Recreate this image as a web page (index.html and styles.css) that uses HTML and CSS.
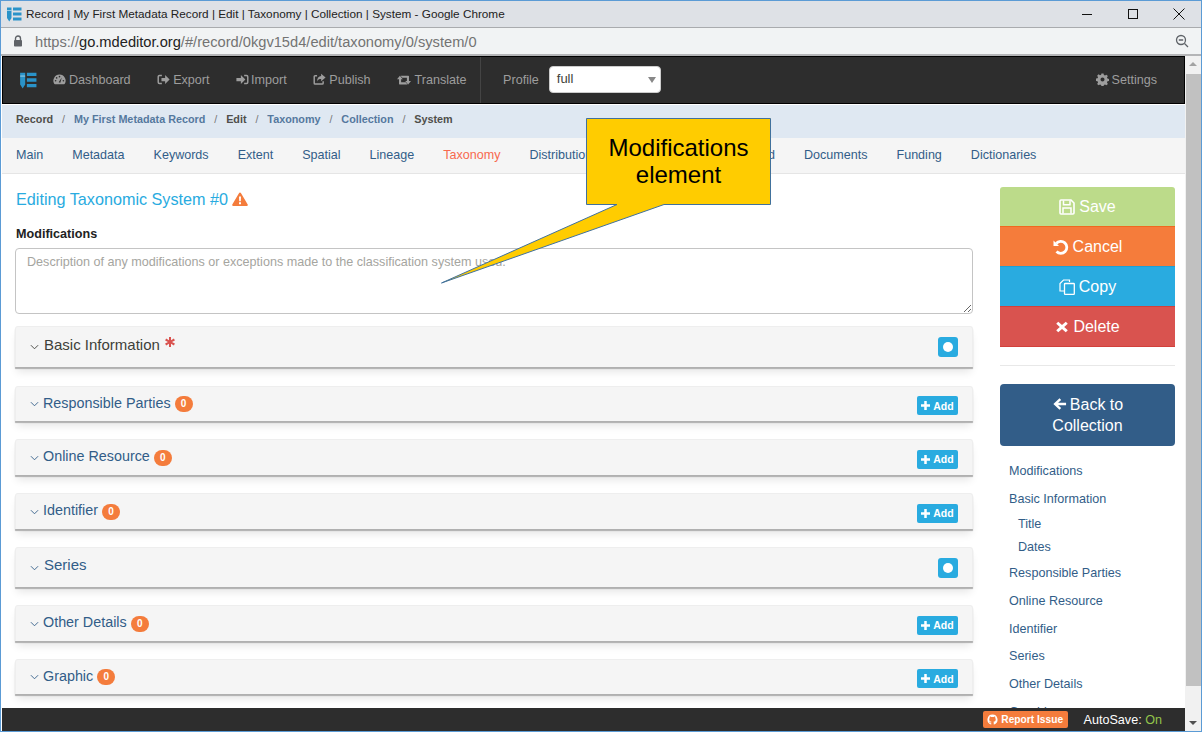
FILE: index.html
```html
<!DOCTYPE html>
<html lang="en">
<head>
<meta charset="utf-8">
<title>Record | My First Metadata Record | Edit | Taxonomy | Collection | System</title>
<link rel="stylesheet" href="styles.css">
</head>
<body>
<div class="window">
  <header class="titlebar">
    <svg class="logo-sm" viewBox="0 0 16 16"><use href="#logo"/></svg>
    <span class="title-text">Record | My First Metadata Record | Edit | Taxonomy | Collection | System - Google Chrome</span>
    <div class="win-controls">
      <svg viewBox="0 0 12 12"><path d="M1 6.500h10" stroke="#111" stroke-width="1"/></svg>
      <svg viewBox="0 0 12 12"><rect x="1.500" y="1.500" width="9" height="9" fill="none" stroke="#111"/></svg>
      <svg viewBox="0 0 12 12"><path d="M.5.500l11 11M11.500.500l-11 11" stroke="#111" fill="none"/></svg>
    </div>
  </header>
  <div class="addressbar">
    <svg class="lock" viewBox="0 0 10 12"><path d="M2.500 5V3.500a2.500 2.500 0 0 1 5 0V5" fill="none" stroke="#5f6368" stroke-width="1.400"/><rect x="1" y="5" width="8" height="6.500" rx=".8" fill="#5f6368"/></svg>
    <span class="url"><span class="url-dim">https://</span><span class="url-host">go.mdeditor.org</span><span class="url-dim">/#/record/0kgv15d4/edit/taxonomy/0/system/0</span></span>
    <svg class="zoom-out" viewBox="0 0 14 14"><circle cx="6" cy="6" r="4.500" fill="none" stroke="#5f6368" stroke-width="1.300"/><path d="M3.800 6h4.400M9.500 9.500l3.500 3.500" stroke="#5f6368" stroke-width="1.300"/></svg>
  </div>
  <div class="viewport">
    <div class="app">
      <div class="app-clip">
        <nav class="navbar">
          <svg class="logo" viewBox="0 0 16 16"><use href="#logo"/></svg>
          <a class="nav-link"><svg class="ic" viewBox="0 0 16 16"><use href="#i-dash"/></svg>Dashboard</a>
          <a class="nav-link"><svg class="ic" viewBox="0 0 16 16"><use href="#i-export"/></svg>Export</a>
          <a class="nav-link"><svg class="ic ic-tight" viewBox="0 0 16 16"><use href="#i-import"/></svg>Import</a>
          <a class="nav-link"><svg class="ic" viewBox="0 0 16 16"><use href="#i-publish"/></svg>Publish</a>
          <a class="nav-link"><svg class="ic ic-wide" viewBox="0 0 16 16"><use href="#i-retweet"/></svg>Translate</a>
          <div class="nav-profile">
            <span class="nav-label">Profile</span>
            <div class="select"><span>full</span><i class="select-caret"></i></div>
          </div>
          <a class="nav-link nav-settings"><svg class="ic ic-gear" viewBox="0 0 16 16"><use href="#i-gear"/></svg>Settings</a>
        </nav>
        <ol class="breadcrumb">
          <li>Record</li><li class="sep">/</li>
          <li class="crumb-link">My First Metadata Record</li><li class="sep">/</li>
          <li>Edit</li><li class="sep">/</li>
          <li class="crumb-link">Taxonomy</li><li class="sep">/</li>
          <li class="crumb-link">Collection</li><li class="sep">/</li>
          <li>System</li>
        </ol>
        <ul class="tabs">
          <li>Main</li><li>Metadata</li><li>Keywords</li><li>Extent</li><li>Spatial</li><li>Lineage</li>
          <li class="tab-active">Taxonomy</li><li>Distribution</li><li>Constraints</li><li>Associated</li><li>Documents</li><li>Funding</li><li>Dictionaries</li>
        </ul>
        <div class="page">
          <main class="main">
            <h3 class="heading">Editing Taxonomic System #0 <svg class="warn" viewBox="0 0 16 14"><path d="M8 .5a1 1 0 0 1 .9.5l6.800 11.500a1 1 0 0 1-.9 1.500H1.200a1 1 0 0 1-.9-1.500L7.100 1A1 1 0 0 1 8 .5z" fill="#f47c3c"/><path d="M7 4.500h2l-.2 4.800H7.200zM7 10.300h2v2H7z" fill="#fff"/></svg></h3>
            <label class="field-label">Modifications</label>
            <textarea class="textarea" placeholder="Description of any modifications or exceptions made to the classification system used."></textarea>

            <section class="panel panel-tall">
              <svg class="chev" viewBox="0 0 10 6"><path d="M1 1l4 4 4-4" fill="none" stroke="#3e3f3a" stroke-width="1"/></svg>
              <span class="panel-title panel-title-dark">Basic Information</span>
              <svg class="req" viewBox="0 0 10 10"><path d="M4 0h2v3.300l2.900-1.700 1 1.800L7 5l2.900 1.600-1 1.800L6 6.700V10H4V6.700L1.100 8.400l-1-1.800L3 5 .1 3.400l1-1.800L4 3.300z" fill="#d9534f"/></svg>
              <span class="btn-dot"><i></i></span>
            </section>
            <section class="panel">
              <svg class="chev" viewBox="0 0 10 6"><path d="M1 1l4 4 4-4" fill="none" stroke="#325d88" stroke-width="1"/></svg>
              <span class="panel-title">Responsible Parties</span><span class="badge">0</span>
              <span class="btn-add"><svg viewBox="0 0 10 10"><path d="M3.600 0h2.800v3.600H10v2.800H6.400V10H3.600V6.400H0V3.600h3.600z" fill="#fff"/></svg>Add</span>
            </section>
            <section class="panel">
              <svg class="chev" viewBox="0 0 10 6"><path d="M1 1l4 4 4-4" fill="none" stroke="#325d88" stroke-width="1"/></svg>
              <span class="panel-title">Online Resource</span><span class="badge">0</span>
              <span class="btn-add"><svg viewBox="0 0 10 10"><path d="M3.600 0h2.800v3.600H10v2.800H6.400V10H3.600V6.400H0V3.600h3.600z" fill="#fff"/></svg>Add</span>
            </section>
            <section class="panel">
              <svg class="chev" viewBox="0 0 10 6"><path d="M1 1l4 4 4-4" fill="none" stroke="#325d88" stroke-width="1"/></svg>
              <span class="panel-title">Identifier</span><span class="badge">0</span>
              <span class="btn-add"><svg viewBox="0 0 10 10"><path d="M3.600 0h2.800v3.600H10v2.800H6.400V10H3.600V6.400H0V3.600h3.600z" fill="#fff"/></svg>Add</span>
            </section>
            <section class="panel panel-series">
              <svg class="chev" viewBox="0 0 10 6"><path d="M1 1l4 4 4-4" fill="none" stroke="#325d88" stroke-width="1"/></svg>
              <span class="panel-title panel-title-big">Series</span>
              <span class="btn-dot"><i></i></span>
            </section>
            <section class="panel">
              <svg class="chev" viewBox="0 0 10 6"><path d="M1 1l4 4 4-4" fill="none" stroke="#325d88" stroke-width="1"/></svg>
              <span class="panel-title">Other Details</span><span class="badge">0</span>
              <span class="btn-add"><svg viewBox="0 0 10 10"><path d="M3.600 0h2.800v3.600H10v2.800H6.400V10H3.600V6.400H0V3.600h3.600z" fill="#fff"/></svg>Add</span>
            </section>
            <section class="panel">
              <svg class="chev" viewBox="0 0 10 6"><path d="M1 1l4 4 4-4" fill="none" stroke="#325d88" stroke-width="1"/></svg>
              <span class="panel-title">Graphic</span><span class="badge">0</span>
              <span class="btn-add"><svg viewBox="0 0 10 10"><path d="M3.600 0h2.800v3.600H10v2.800H6.400V10H3.600V6.400H0V3.600h3.600z" fill="#fff"/></svg>Add</span>
            </section>
          </main>
          <aside class="side">
            <div class="actions">
              <button class="act act-save"><svg viewBox="0 0 16 16"><use href="#i-save"/></svg>Save</button>
              <button class="act act-cancel"><svg viewBox="0 0 16 16"><use href="#i-undo"/></svg>Cancel</button>
              <button class="act act-copy"><svg viewBox="0 0 16 16"><use href="#i-copy"/></svg>Copy</button>
              <button class="act act-delete"><svg class="icon-x" viewBox="0 0 16 16"><path d="M3.700 2l4.300 3.800L12.300 2 14.600 4.400 10.500 8l4.100 3.600-2.300 2.400L8 10.200 3.700 14 1.400 11.600 5.500 8 1.400 4.400z" fill="#fff"/></svg>Delete</button>
            </div>
            <hr class="rule">
            <button class="back"><svg viewBox="0 0 16 16"><path d="M8 1.500l1.900 1.900L6.400 6.500h9.100v3H6.400l3.500 3.100L8 14.500 1 8z" fill="#fff"/></svg>Back to Collection</button>
            <ul class="toc">
              <li>Modifications</li>
              <li>Basic Information</li>
              <li class="toc-sub">Title</li>
              <li class="toc-sub toc-sub2">Dates</li>
              <li class="toc-after">Responsible Parties</li>
              <li>Online Resource</li>
              <li>Identifier</li>
              <li>Series</li>
              <li>Other Details</li>
              <li>Graphic</li>
            </ul>
          </aside>
        </div>
      </div>
      <footer class="footer">
        <span class="report"><svg viewBox="0 0 16 16"><path d="M8 .8a7.400 7.400 0 0 0-2.300 14.400c.4.100.5-.2.500-.4v-1.300c-2.100.4-2.500-1-2.500-1-.3-.9-.8-1.100-.8-1.100-.7-.5 0-.5 0-.5.700.100 1.100.8 1.100.8.700 1.100 1.700.8 2.100.6.100-.5.300-.8.500-1-1.600-.2-3.400-.8-3.400-3.600 0-.8.300-1.500.8-2-.1-.2-.3-.9.100-2 0 0 .6-.2 2 .8a7 7 0 0 1 3.700 0c1.400-1 2-.8 2-.8.400 1.100.2 1.800.1 2 .5.500.8 1.200.8 2 0 2.800-1.700 3.400-3.400 3.600.3.200.5.700.5 1.400v2.100c0 .2.100.5.500.4A7.400 7.400 0 0 0 8 .8z" fill="#fff"/></svg>Report Issue</span>
        <span class="autosave">AutoSave: <b>On</b></span>
      </footer>
    </div>
    <div class="scrollbar">
      <i class="arrow-up"></i>
      <div class="thumb"></div>
      <i class="arrow-down"></i>
    </div>
    <div class="callout">
      <svg class="callout-shape" viewBox="0 0 186 168"><path d="M.5.500H184.500V86.500H78L-144.500 165 31 86.500H.5z" fill="#ffcc00" stroke="#41719c" stroke-width="1"/></svg>
      <span class="callout-text">Modifications<br>element</span>
    </div>
  </div>
</div>
<svg class="sprite" aria-hidden="true">
  <symbol id="logo" viewBox="0 0 16 16"><path d="M1 1.500h4.500v10.500L3.250 15.500 1 12zM7 1.500h8.500v3H7zM7 6.500h8.500v3H7zM7 11.500h8.500v3H7z" fill="#2a93c9"/><path d="M1 4.500h4.500" stroke="#fff" stroke-width=".5"/></symbol>
  <symbol id="i-dash" viewBox="0 0 16 16"><path d="M8 2a7.500 7.500 0 0 0-6.500 11.300c.2.300.5.500.9.500h11.200c.4 0 .7-.2.900-.5A7.500 7.500 0 0 0 8 2z" fill="#9d9d9d"/><circle cx="8" cy="4.500" r="1" fill="#2d2d2d"/><circle cx="4.500" cy="6" r="1" fill="#2d2d2d"/><circle cx="3.200" cy="9.500" r="1" fill="#2d2d2d"/><circle cx="12.800" cy="9.500" r="1" fill="#2d2d2d"/><path d="M7 11.500L10.800 5.500 9 12z" fill="#2d2d2d"/></symbol>
  <symbol id="i-export" viewBox="0 0 16 16"><path d="M6 3H3a1.500 1.500 0 0 0-1.500 1.500v7A1.500 1.500 0 0 0 3 13h3" fill="none" stroke="#9d9d9d" stroke-width="1.800"/><path d="M5.500 6H10V2.500L15.500 8 10 13.500V10H5.500z" fill="#9d9d9d"/></symbol>
  <symbol id="i-import" viewBox="0 0 16 16"><path d="M10 3h3a1.500 1.500 0 0 1 1.500 1.500v7A1.500 1.500 0 0 1 13 13h-3" fill="none" stroke="#9d9d9d" stroke-width="1.800"/><path d="M.5 6H6V2.500L11.500 8 6 13.500V10H.5z" fill="#9d9d9d"/></symbol>
  <symbol id="i-publish" viewBox="0 0 16 16"><path d="M12.500 10v2.500a1 1 0 0 1-1 1h-9a1 1 0 0 1-1-1v-8a1 1 0 0 1 1-1H5" fill="none" stroke="#9d9d9d" stroke-width="1.800"/><path d="M10 1l5.500 4.500L10 10V7.500c-2.500 0-4 .5-5 3 0-4 2-6.500 5-6.700z" fill="#9d9d9d"/></symbol>
  <symbol id="i-retweet" viewBox="0 0 16 16"><path d="M3.300 3L6.600 7H4.700v3.500H10l2 2.500H3a.7.7 0 0 1-.7-.7V7H0z" fill="#9d9d9d"/><path d="M12.700 13L9.400 9h1.900V5.500H6L4 3h9a.7.7 0 0 1 .7.7V9H16z" fill="#9d9d9d"/></symbol>
  <symbol id="i-gear" viewBox="0 0 16 16"><path fill-rule="evenodd" d="M6.700 1h2.600l.4 2 1.400.6 1.700-1.100 1.800 1.800-1.100 1.700.6 1.400 2 .4v2.600l-2 .4-.6 1.400 1.100 1.700-1.800 1.800-1.700-1.100-1.400.6-.4 2H6.700l-.4-2-1.400-.6-1.700 1.100-1.800-1.800 1.100-1.700-.6-1.400-2-.4V7.400l2-.4.600-1.400L1.400 3.900l1.800-1.800 1.700 1.100 1.400-.6zM8 6a2.500 2.500 0 1 0 0 5 2.500 2.500 0 0 0 0-5z" fill="#9d9d9d" transform="translate(0 -.5)"/></symbol>
  <symbol id="i-save" viewBox="0 0 16 16"><path d="M2 1h10l3 3v10a1 1 0 0 1-1 1H2a1 1 0 0 1-1-1V2a1 1 0 0 1 1-1z" fill="none" stroke="#fff" stroke-width="1.600"/><path d="M4.500 1.500v4.300h6.500V1.500M4 14.500V9h8v5.500" fill="none" stroke="#fff" stroke-width="1.500"/></symbol>
  <symbol id="i-undo" viewBox="0 0 16 16"><path d="M.5 1.500l5.500 5.500H.5z" fill="#fff"/><path d="M3.200 4.500A6 6 0 1 1 3.500 12.500" fill="none" stroke="#fff" stroke-width="2.800"/></symbol>
  <symbol id="i-copy" viewBox="0 0 16 16"><path d="M10.500 3V1H4.500L1 4.500V12h4" fill="none" stroke="#fff" stroke-width="1.200"/><rect x="5.500" y="4.500" width="9.800" height="10.800" rx=".6" fill="none" stroke="#fff" stroke-width="1.300"/></symbol>
</svg>
</body>
</html>
```
FILE: styles.css
```css
* { box-sizing: border-box; }
html, body { margin: 0; padding: 0; height: 100%; overflow: hidden; background: #fff; }
body { font-family: "Liberation Sans", Arial, sans-serif; color: #3e3f3a; }
ul, ol { list-style: none; margin: 0; padding: 0; }
.sprite { display: none; }

.window { display: flex; flex-direction: column; height: 732px; width: 1202px; border: 1px solid #5b9bd5; }

.titlebar { display: flex; align-items: center; height: 27px; background: #dee1e6; border-bottom: 1px solid #a9abae; padding-left: 5px; flex: none; }
.logo-sm { width: 16px; height: 16px; margin-right: 4px; }
.title-text { font-size: 11.750px; color: #222; padding-bottom: 2px; }
.win-controls { margin-left: auto; display: flex; gap: 34px; padding-right: 16px; }
.win-controls svg { width: 12px; height: 12px; display: block; }

.addressbar { display: flex; align-items: center; height: 28px; background: #f1f3f4; border-bottom: 2px solid #b4b5b7; flex: none; padding-left: 12px; }
.lock { width: 10px; height: 12px; margin-right: 12px; }
.url { font-size: 14.660px; padding-top: 1px; }
.url-dim { color: #737373; }
.url-host { color: #222; }
.zoom-out { width: 14px; height: 14px; margin-left: auto; margin-right: 12px; }

.viewport { flex: 1; display: flex; min-height: 0; position: relative; padding-left: 1px; }
.app { flex: 1; min-width: 0; display: flex; flex-direction: column; }
.app-clip { flex: 1; min-height: 0; overflow: hidden; }

.navbar { display: flex; align-items: center; height: 48px; background: #2d2d2d; border: 1px solid #000; padding: 0 0 1px 16px; }
.logo { width: 18px; height: 18px; margin-right: 16px; }
.nav-link { display: flex; align-items: center; font-size: 12.600px; color: #9d9d9d; margin-right: 26.500px; white-space: nowrap; }
.ic { width: 13px; height: 13px; margin-right: 3px; }
.ic-tight { margin-right: 2px; }
.ic-wide { width: 14px; height: 14px; margin-right: 3.500px; }
.ic-gear { width: 13px; height: 13px; margin-right: 2px; }
.nav-profile { display: flex; align-items: center; align-self: stretch; margin: 0 0 -1px -13px; padding: 0 0 1px 22px; border-left: 1px solid #444; }
.nav-label { font-size: 12.600px; color: #9d9d9d; margin-right: 10px; }
.select { position: relative; width: 112px; height: 27px; background: #fff; border: 1px solid #ccc; border-radius: 4px; font-size: 13px; color: #3e3f3a; line-height: 24px; padding-left: 7px; }
.select-caret { position: absolute; right: 4px; top: 10px; border: 4px solid transparent; border-top: 6px solid #888; border-bottom: 0; }
.nav-settings { margin-left: auto; margin-right: 27px; }

.breadcrumb { display: flex; align-items: center; height: 33px; background: #dfe8f2; margin-top: 1px; padding: 0 0 6px 14px; font-size: 10.800px; font-weight: bold; color: #4f4f4b; }
.crumb-link { color: #55789e; }
.sep { color: #777; font-weight: normal; margin: 0 8.900px; }

.tabs { display: flex; align-items: center; height: 36px; background: #f5f5f5; border-bottom: 1px solid #e5e5e5; padding: 0 0 2px 14px; font-size: 12.550px; color: #325d88; gap: 29px; white-space: nowrap; }
.tab-active { color: #f8694f; }

.page { display: flex; padding-left: 13px; }
.main { width: 958px; flex: none; }
.heading { margin: 0; padding: 15px 0 0 1px; font-size: 16.200px; line-height: 20px; font-weight: normal; color: #29abe0; display: flex; align-items: center; gap: 4px; }
.warn { width: 16px; height: 14px; }
.field-label { display: block; margin: 17px 0 0 1px; font-size: 12.600px; line-height: 16px; font-weight: bold; color: #222; }
.textarea { display: block; width: 100%; height: 66px; margin-top: 6px; border: 1px solid #c4c4c4; border-radius: 4px; padding: 6px 11px; font-family: "Liberation Sans", sans-serif; font-size: 12.600px; color: #555; outline: 0; resize: vertical; }
.textarea::placeholder { color: #a5a5a0; opacity: 1; }

.panel { display: flex; align-items: center; height: 36px; margin-top: 18px; padding: 0 14px; background: #f5f5f5; border: 1px solid #eeeeee; border-bottom: 0; border-radius: 3px 3px 0 0; box-shadow: 0 2px 1px #b0b0b0, 0 7px 8px -2px rgba(0,0,0,.1); }
.panel-tall { height: 41px; margin-top: 12px; }
.panel-tall + .panel { height: 35px; margin-top: 19px; }
.panel:last-child { height: 35px; }
.panel-series { height: 40px; }
.chev { width: 9px; height: 6px; margin-right: 4px; flex: none; }
.panel-title { font-size: 14.350px; color: #325d88; padding-bottom: 3px; }
.panel-title-dark { color: #3e3f3a; font-size: 15px; margin-left: 1px; padding-bottom: 5px; }
.panel-title-big { font-size: 15px; margin-left: 1px; padding-bottom: 7px; }
.req { width: 10px; height: 10px; margin: -11px 0 0 5px; }
.badge { display: inline-block; min-width: 18px; height: 16px; line-height: 16px; border-radius: 8px; background: #f47c3c; color: #fff; font-size: 10px; font-weight: bold; text-align: center; margin-left: 4px; }
.btn-add { margin: 3px 0 0 auto; display: flex; align-items: center; justify-content: center; gap: 3px; width: 41px; height: 19px; background: #29abe0; border-radius: 2px; color: #fff; font-size: 10.500px; font-weight: bold; }
.btn-add svg { width: 9px; height: 9px; }
.btn-dot { margin-left: auto; display: flex; align-items: center; justify-content: center; width: 20px; height: 20px; background: #29abe0; border-radius: 3px; }
.btn-dot i { width: 10px; height: 10px; border-radius: 50%; background: #fff; }

.side { width: 175px; margin-left: 27px; flex: none; padding-top: 13px; }
.actions { display: flex; flex-direction: column; }
.act { display: flex; align-items: center; justify-content: center; gap: 4px; width: 100%; height: 40px; border: 0; color: #fff; font-family: "Liberation Sans", sans-serif; font-size: 16px; padding: 0; }
.act svg { width: 16px; height: 16px; }
.act .icon-x { width: 14px; height: 14px; }
.act-save { height: 39px; background: #bcdb8a; border-radius: 3px 3px 0 0; }
.act-cancel { background: #f57c3b; border-top: 1px solid #f0691f; }
.act-copy { background: #29abe0; border-top: 1px solid #1f9fd4; }
.act-delete { height: 41px; background: #d9534f; border-top: 1px solid #d2403b; border-bottom: 1px solid #d2403b; }
.rule { border: 0; border-top: 1px solid #e8e8e8; margin: 18px 0; }
.back { display: block; width: 100%; height: 62px; border: 0; border-radius: 4px; background: #325d88; color: #fff; font-family: "Liberation Sans", sans-serif; font-size: 16px; line-height: 21px; padding: 0 30px; }
.back svg { width: 15px; height: 14px; margin-right: 3px; vertical-align: -1px; }
.toc { margin-top: 15px; padding-left: 9px; font-size: 12.600px; line-height: 20px; color: #325d88; display: flex; flex-direction: column; gap: 7.750px; }
.toc-sub { padding-left: 9px; margin-top: -3px; }
.toc-sub2 { margin-top: -4px; }
.toc-after { margin-top: -2px; }

.footer { flex: none; display: flex; align-items: center; justify-content: flex-end; height: 23px; background: #2d2d2d; padding-right: 23px; }
.report { display: flex; align-items: center; gap: 3px; height: 17px; padding: 0 4.500px; background: #f47c3c; border-radius: 2px; color: #fff; font-size: 10.200px; font-weight: bold; }
.report svg { width: 11px; height: 11px; }
.autosave { margin-left: 16px; font-size: 12.600px; color: #fff; }
.autosave b { font-weight: normal; color: #93c54b; }

.scrollbar { width: 16px; flex: none; background: #f1f1f1; display: flex; flex-direction: column; align-items: center; }
.thumb { width: 15px; height: 612px; background: #c1c1c1; margin-top: 8px; }
.arrow-up { margin-top: 6px; border: 4px solid transparent; border-bottom: 4px solid #a3a3a3; border-top: 0; }
.arrow-down { margin-top: auto; margin-bottom: 6px; border: 4px solid transparent; border-top: 4px solid #505050; border-bottom: 0; }

.callout { position: absolute; left: 585px; top: 62px; width: 185px; height: 87px; }
.callout-shape { position: absolute; left: 0; top: 0; width: 186px; height: 168px; overflow: visible; }
.callout-text { position: relative; display: block; text-align: center; padding-top: 16px; font-size: 24px; line-height: 27px; color: #000; }
```
